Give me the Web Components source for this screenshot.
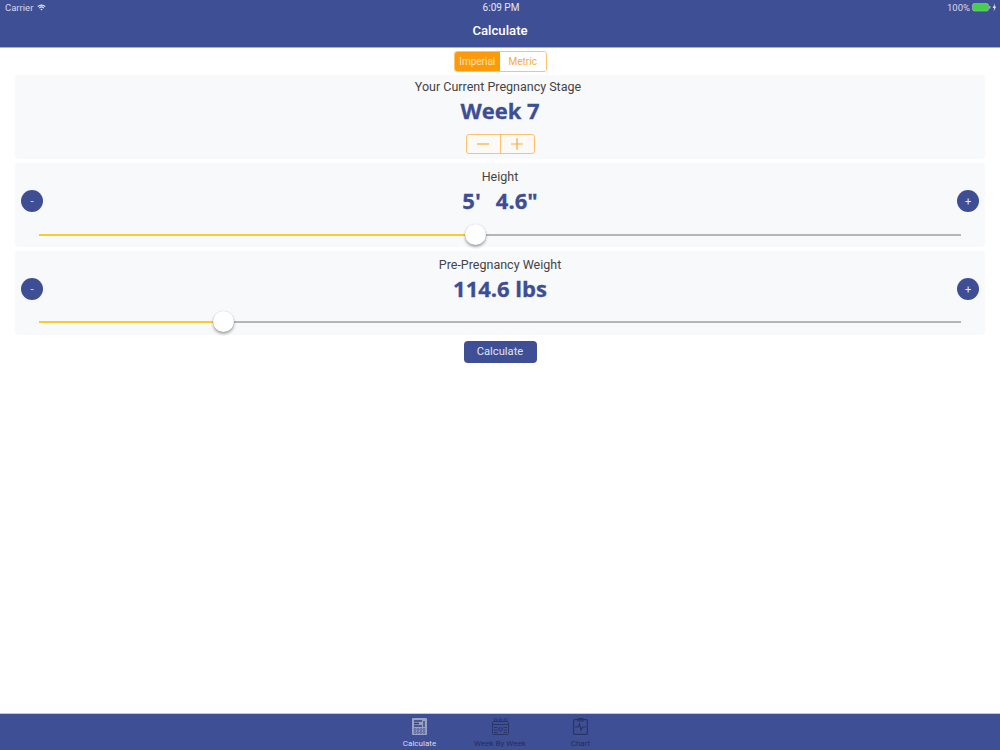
<!DOCTYPE html>
<html>
<head>
<meta charset="utf-8">
<style>
  html, body { margin: 0; padding: 0; height: 100%; background: #fff; }
  body { font-family: Roboto, "Liberation Sans", sans-serif; overflow: hidden; }
</style>
</head>
<body>
<calc-screen>
  <app-header title="Calculate"></app-header>
  <unit-toggle></unit-toggle>
  <stage-card label="Your Current Pregnancy Stage" value="Week 7"></stage-card>
  <measure-card label="Height" value="5'&nbsp;&nbsp;&#8201;4.6&quot;" percent="47.34" top="18"></measure-card>
  <measure-card label="Pre-Pregnancy Weight" value="114.6 lbs" percent="20" top="17"></measure-card>
  <calc-button>Calculate</calc-button>
  <tab-bar></tab-bar>
</calc-screen>

<script>
class CalcScreen extends HTMLElement {
  connectedCallback() {
    this.attachShadow({ mode: 'open' });
    this.shadowRoot.innerHTML = `
      <style>
        :host { display: flex; flex-direction: column; height: 750px; }
      </style>
      <slot></slot>
    `;
  }
}

class AppHeader extends HTMLElement {
  connectedCallback() {
    this.attachShadow({ mode: 'open' });
    this.shadowRoot.innerHTML = `
      <style>
        :host { display: block; background: #3f4f95; border-bottom: 1px solid #a9b0d2; height: 47px; color: #fff; }
        .status {
          display: grid; grid-template-columns: 1fr auto 1fr; align-items: center;
          height: 15px; padding: 0 3px 0 5px; font-size: 9.5px; color: #d5d9ea;
        }
        .left { display: flex; align-items: center; gap: 4px; }
        .right { display: flex; align-items: center; justify-content: flex-end; gap: 2px; }
        .time { color: #e6e8f2; font-size: 10px; }
        .title { text-align: center; font-size: 13.2px; font-weight: 500; line-height: 18px; margin-top: 7px; }
      </style>
      <div class="status">
        <div class="left">
          <span>Carrier</span>
          <svg width="9" height="7" viewBox="0 0 10 8">
            <path d="M0.3 2.6 A6.6 6.6 0 0 1 9.7 2.6 L8.8 3.5 A5.3 5.3 0 0 0 1.2 3.5Z" fill="#e6e8f2"/>
            <path d="M2 4.2 A4.2 4.2 0 0 1 8 4.2 L7.1 5.1 A3 3 0 0 0 2.9 5.1Z" fill="#e6e8f2"/>
            <path d="M3.7 5.9 A1.9 1.9 0 0 1 6.3 5.9 L5 7.3Z" fill="#e6e8f2"/>
          </svg>
        </div>
        <div class="time">6:09 PM</div>
        <div class="right">
          <span>100%</span>
          <svg width="25" height="9" viewBox="0 0 25 9">
            <rect x="0.5" y="0.5" width="16" height="7.5" rx="1.8" fill="#44d24c" stroke="#9fb8a8" stroke-width="0.7"/>
            <rect x="17.3" y="3" width="1" height="2.6" fill="#c8cde2"/>
            <path d="M23 0.5 L20.6 5 H22.2 L21.6 8.5 L24.2 3.6 H22.6Z" fill="#e6e8f2"/>
          </svg>
        </div>
      </div>
      <div class="title">${this.getAttribute('title')}</div>
    `;
  }
}

class UnitToggle extends HTMLElement {
  connectedCallback() {
    this.attachShadow({ mode: 'open' });
    this.shadowRoot.innerHTML = `
      <style>
        :host { display: flex; justify-content: center; padding: 3px 0 3px; }
        .seg { display: flex; width: 93px; height: 21px; border: 1.5px solid #fdc26f; border-radius: 3px; overflow: hidden; font-size: 10px; box-sizing: border-box; }
        span { flex: 1; display: flex; align-items: center; justify-content: center; }
        .on { background: #fb9a0b; color: #fde3bd; }
        .off { color: #fba93a; background: #fff; }
      </style>
      <div class="seg"><span class="on">Imperial</span><span class="off">Metric</span></div>
    `;
  }
}

const cardStyles = `
  :host { display: block; margin: 0 15px 4px; background: #f8f9fb; border-radius: 4px; color: #3a3a3c; text-align: center; }
  .label { font-size: 12.5px; line-height: 16px; color: #444; }
  .value { font-family: "Open Sans", Lato, sans-serif; font-weight: 700; color: #3d4e95; -webkit-text-stroke: 0.3px #3d4e95; font-size: 22px; line-height: 28px; padding-bottom: 2px; }
`;

class StageCard extends HTMLElement {
  connectedCallback() {
    this.attachShadow({ mode: 'open' });
    this.shadowRoot.innerHTML = `
      <style>
        ${cardStyles}
        :host { height: 84px; padding-top: 4px; box-sizing: border-box; }
        .label { margin-left: -4px; }
        .value { margin-top: 1px; }
        .stepper { display: inline-flex; margin-top: 8px; width: 69px; height: 20px; border: 1.5px solid #fdc26f; border-radius: 3px; box-sizing: border-box; background: #fbfaf6; }
        .stepper div { flex: 1; display: flex; align-items: center; justify-content: center; }
        .stepper div + div { border-left: 1.5px solid #fdc26f; }
      </style>
      <div class="label">${this.getAttribute('label')}</div>
      <div class="value">${this.getAttribute('value')}</div>
      <div class="stepper">
        <div><svg width="12" height="12" viewBox="0 0 12 12"><path d="M0 6H12" stroke="#fba93a" stroke-width="1.2"/></svg></div>
        <div><svg width="12" height="12" viewBox="0 0 12 12"><path d="M0 6H12M6 0V12" stroke="#fba93a" stroke-width="1.2"/></svg></div>
      </div>
    `;
  }
}

class MeasureCard extends HTMLElement {
  connectedCallback() {
    const top = this.getAttribute('top');
    const pct = this.getAttribute('percent');
    this.attachShadow({ mode: 'open' });
    this.shadowRoot.innerHTML = `
      <style>
        ${cardStyles}
        :host { height: 84px; padding-top: 6px; box-sizing: border-box; }
        .row { display: grid; grid-template-columns: 22px 1fr 22px; align-items: center; padding: 0 6px; margin-top: 1px; }
        .round { width: 22px; height: 22px; border-radius: 50%; background: #3d4e95; color: #e6e8f2; font-size: 11px; display: flex; align-items: center; justify-content: center; }
        .value { white-space: pre; }
        .track { position: relative; height: 2px; margin: ${top}px 24px 0 24px; background: #b5b5b5; }
        .fill { height: 2px; width: ${pct}%; background: #fbcb2b; }
        .thumb { position: absolute; left: ${pct}%; top: 50%; width: 21px; height: 21px; margin: -11px 0 0 -10px; border-radius: 50%; background: #fff; box-shadow: 0 2px 3px rgba(0,0,0,.35), 0 0 1px rgba(0,0,0,.2); }
      </style>
      <div class="label">${this.getAttribute('label')}</div>
      <div class="row">
        <div class="round">-</div>
        <div class="value">${this.getAttribute('value')}</div>
        <div class="round">+</div>
      </div>
      <div class="track"><div class="fill"></div><div class="thumb"></div></div>
    `;
  }
}

class CalcButton extends HTMLElement {
  connectedCallback() {
    this.attachShadow({ mode: 'open' });
    this.shadowRoot.innerHTML = `
      <style>
        :host { display: flex; justify-content: center; flex: 1; align-items: flex-start; padding-top: 2px; }
        button { all: unset; width: 73px; height: 22px; background: #3f4f95; color: #dfe2ef; border-radius: 4px; font-size: 11.2px; text-align: center; line-height: 22px; }
      </style>
      <button><slot></slot></button>
    `;
  }
}

class TabBar extends HTMLElement {
  connectedCallback() {
    this.attachShadow({ mode: 'open' });
    const stroke = '#2a3466';
    this.shadowRoot.innerHTML = `
      <style>
        :host { display: flex; justify-content: center; height: 36px; background: #3f4f95; border-top: 1px solid #c4c7d6; color: #252d55; }
        .tab { width: 80.5px; display: flex; flex-direction: column; align-items: center; padding-top: 4px; font-size: 8px; }
        .tab svg { display: block; height: 17px; margin-bottom: 4px; }
        .tab.active { color: #d8dcec; }
      </style>
      <div class="tab active">
        <svg width="15" height="17" viewBox="0 0 15 17">
          <rect x="0" y="0" width="15" height="17" rx="1" fill="#9aa1c6"/>
          <path d="M2 3H10M2 5.5H7M2 8H10M12 3V9" stroke="#333f7c" stroke-width="1.3" fill="none"/>
          <g fill="none" stroke="#3f4f95" stroke-width="0.8">
            <circle cx="3" cy="11.5" r="1"/><circle cx="6" cy="11.5" r="1"/><circle cx="9" cy="11.5" r="1"/><circle cx="12" cy="11.5" r="1"/>
            <circle cx="3" cy="14.5" r="1"/><circle cx="6" cy="14.5" r="1"/><circle cx="9" cy="14.5" r="1"/><circle cx="12" cy="14.5" r="1"/>
          </g>
        </svg>
        Calculate
      </div>
      <div class="tab">
        <svg width="17" height="17" viewBox="0 0 17 17" fill="none" stroke="${stroke}" stroke-width="1">
          <rect x="0.5" y="3.5" width="16" height="13" rx="1"/>
          <circle cx="3.5" cy="2" r="1.4"/><circle cx="8.5" cy="2" r="1.4"/><circle cx="13.5" cy="2" r="1.4"/>
          <path d="M0.5 6.5H16.5M2 9.5H5.5M2 12H5.5M2 14.5H5.5M11.5 9.5H15M11.5 12H15M11.5 14.5H15"/>
          <path d="M8.5 13.5 L6.6 11 Q6.6 9 8.5 10 Q10.4 9 10.4 11Z"/>
        </svg>
        Week By Week
      </div>
      <div class="tab">
        <svg width="15" height="17" viewBox="0 0 15 17" fill="none" stroke="${stroke}" stroke-width="1.2">
          <rect x="0.6" y="1.6" width="13.8" height="14.8" rx="1"/>
          <path d="M5 0.6H10V3H5Z"/>
          <path d="M2 9H5L6.5 6L8 12L9.5 9H13"/>
        </svg>
        Chart
      </div>
    `;
  }
}

customElements.define('calc-screen', CalcScreen);
customElements.define('app-header', AppHeader);
customElements.define('unit-toggle', UnitToggle);
customElements.define('stage-card', StageCard);
customElements.define('measure-card', MeasureCard);
customElements.define('calc-button', CalcButton);
customElements.define('tab-bar', TabBar);
</script>
</body>
</html>
